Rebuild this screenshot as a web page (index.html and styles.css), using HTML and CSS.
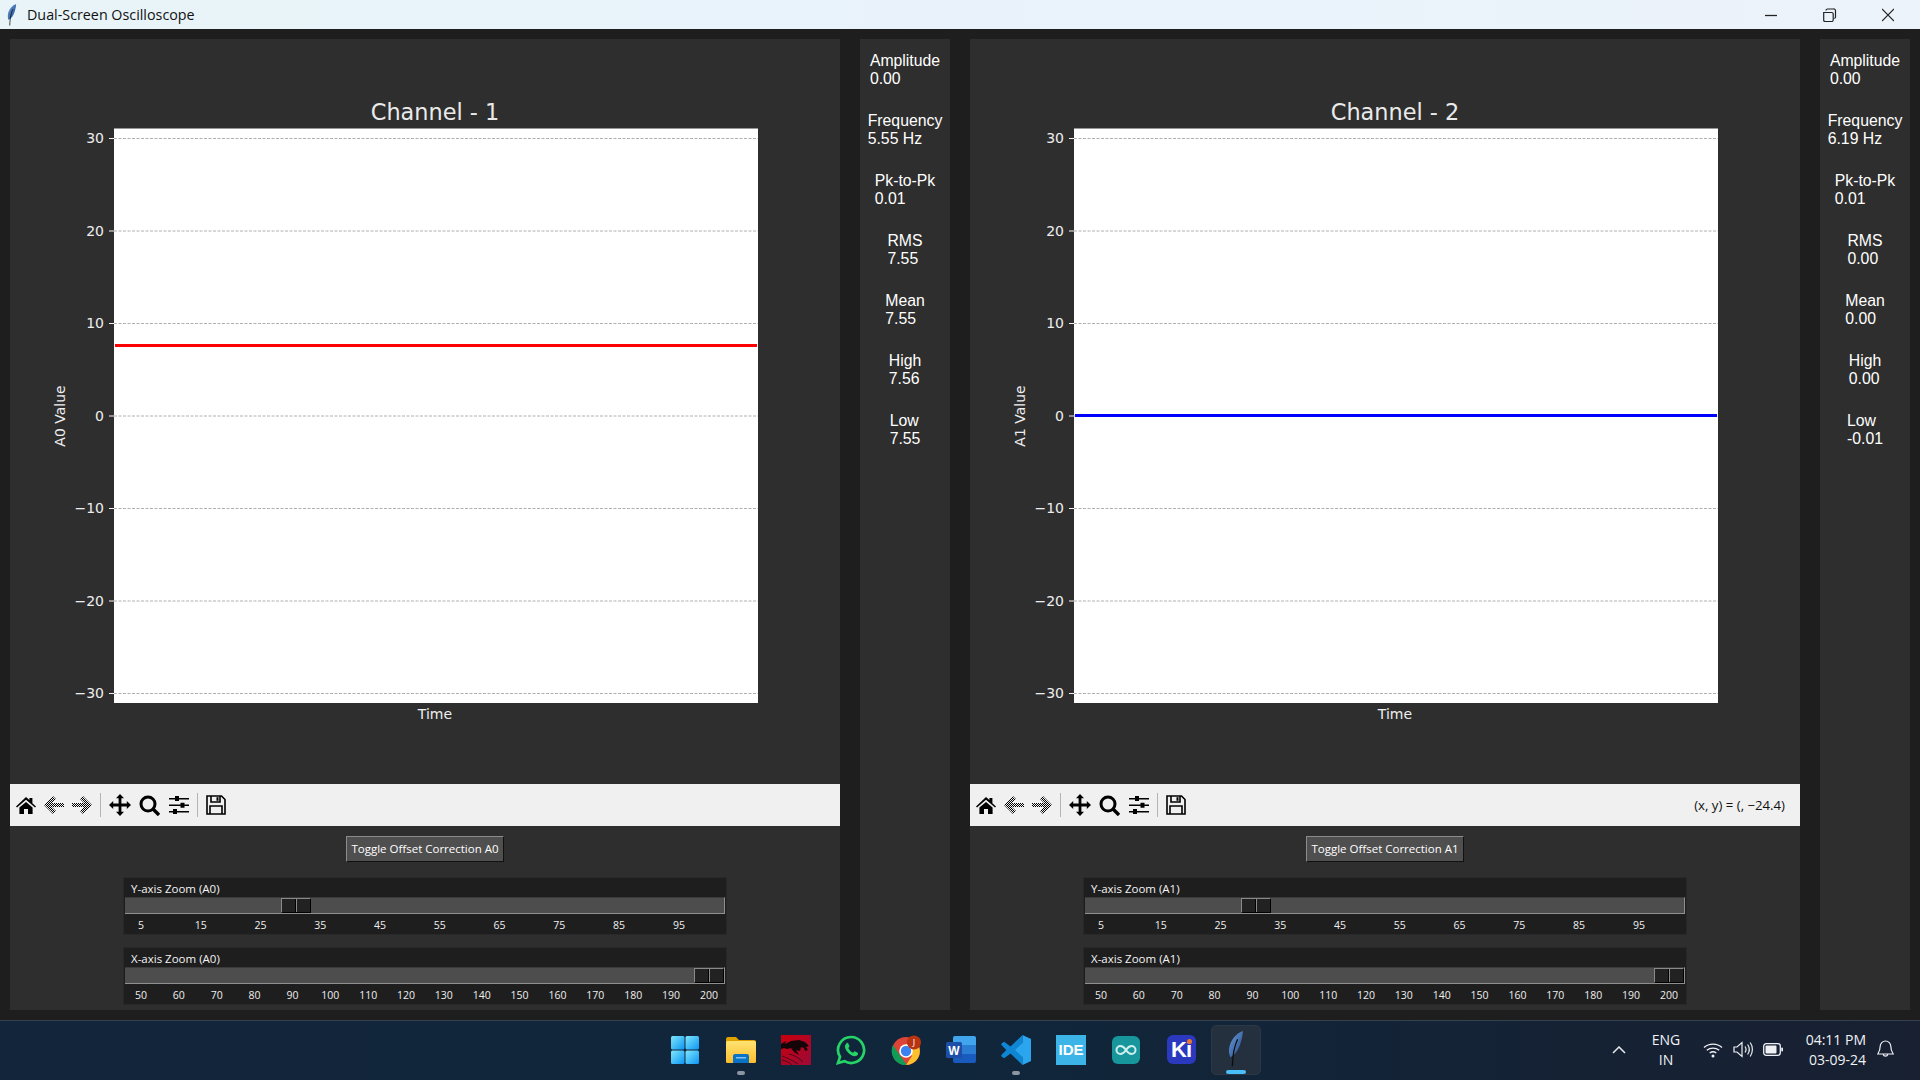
FILE: index.html
```html
<!DOCTYPE html>
<html lang="en">
<head>
<meta charset="utf-8">
<title>Dual-Screen Oscilloscope</title>
<link rel="stylesheet" href="styles.css">
</head>
<body>
<svg class="sprite" width="0" height="0" aria-hidden="true">
  <defs>
    <pattern id="dither" width="2" height="2" patternUnits="userSpaceOnUse">
      <rect width="2" height="2" fill="#f0f0f0"/>
      <rect width="1" height="1" fill="#000"/>
      <rect x="1" y="1" width="1" height="1" fill="#000"/>
    </pattern>
    <linearGradient id="featherBlue" x1="0" y1="0" x2="1" y2="1">
      <stop offset="0" stop-color="#6b9bdc"/>
      <stop offset="1" stop-color="#234a88"/>
    </linearGradient>
    <linearGradient id="startBlue" x1="0" y1="0" x2="1" y2="1">
      <stop offset="0" stop-color="#7fe6fb"/>
      <stop offset="1" stop-color="#0c95f5"/>
    </linearGradient>
    <linearGradient id="folderYellow" x1="0" y1="0" x2="0" y2="1">
      <stop offset="0" stop-color="#ffe372"/>
      <stop offset="1" stop-color="#fdbd2e"/>
    </linearGradient>
    <linearGradient id="msiRed" x1="0" y1="0" x2="1" y2="1">
      <stop offset="0" stop-color="#c8000e"/>
      <stop offset="1" stop-color="#9c0a36"/>
    </linearGradient>
    <symbol id="i-home" viewBox="0 0 20 17">
      <path d="M10 0l3.4 3V1h3v5.2L20 9.4l-1 1.2L10 2.8 1 10.6 0 9.4z"/>
      <path d="M3.4 10.6L10 5l6.6 5.6V17H12v-5H8v5H3.4z"/>
    </symbol>
    <symbol id="i-back" viewBox="0 0 20 20">
      <path fill="url(#dither)" d="M0 10l9-9 3 3-4 4h12v4H8l4 4-3 3z"/>
    </symbol>
    <symbol id="i-forward" viewBox="0 0 20 20">
      <path fill="url(#dither)" d="M20 10l-9-9-3 3 4 4H0v4h12l-4 4 3 3z"/>
    </symbol>
    <symbol id="i-move" viewBox="0 0 22 22">
      <path d="M11 0l4 4.2h-2.600v5.400h5.400V7L22 11l-4.200 4v-2.600h-5.400v5.400H15L11 22l-4-4.200h2.600v-5.400H4.200V15L0 11l4.200-4v2.600h5.400V4.200H7z"/>
    </symbol>
    <symbol id="i-zoom" viewBox="0 0 22 21">
      <circle cx="9" cy="9" r="7" fill="none" stroke="#000" stroke-width="3"/>
      <path d="M14 14l6 6" fill="none" stroke="#000" stroke-width="3.400"/>
    </symbol>
    <symbol id="i-sliders" viewBox="0 0 20 20">
      <path d="M0 3h20v1.500H0zM0 9.500h20V11H0zM0 16h20v1.500H0z"/>
      <path d="M6 1h4v5H6zM11.500 7.700h4v5h-4zM4 14h4v5H4z"/>
    </symbol>
    <symbol id="i-save" viewBox="0 0 20 20">
      <path fill="none" stroke="#000" stroke-width="1.600" d="M1 1h14.500L19 4.500V19H1zM5 1v6h9V1M4 19v-8h12v8"/>
      <path d="M10.500 2.200h2v3.600h-2z"/>
    </symbol>
    <symbol id="i-feather" viewBox="0 0 18 44">
      <path fill="url(#featherBlue)" d="M17.500 0C9 3 2 11 .5 22c-.6 4 .5 7 1.500 10 6-3 10-9 12.500-17 1.500-5 2.700-10 3-15z"/>
      <path fill="none" stroke="#0b0b0b" stroke-width="1.500" d="M11 10C7 18 5 28 4.500 43"/>
    </symbol>
  </defs>
</svg>

<header class="titlebar">
  <svg class="title-icon" viewBox="0 0 18 44"><use href="#i-feather"/></svg>
  <span class="title-text">Dual-Screen Oscilloscope</span>
  <div class="window-controls">
    <svg class="win-btn" viewBox="0 0 58 14"><path d="M0 7.500h12" stroke="#222" stroke-width="1.300" fill="none"/></svg>
    <svg class="win-btn win-restore" viewBox="0 0 59 14"><path d="M.7 4.500h8a1.500 1.500 0 0 1 1.500 1.500v6a1.500 1.500 0 0 1-1.500 1.500h-7A1.500 1.500 0 0 1 .7 12zM3 2.500V2.200A1.500 1.500 0 0 1 4.500 1h6A1.700 1.700 0 0 1 12.500 2.700V9a1.500 1.500 0 0 1-1.200 1.500" stroke="#222" stroke-width="1.200" fill="none"/></svg>
    <svg class="win-btn win-close" viewBox="0 0 12 14"><path d="M0 1l12 12M12 1L0 13" stroke="#222" stroke-width="1.200" fill="none"/></svg>
  </div>
</header>

<main class="workspace">
  <section class="panel">
    <svg class="figure" viewBox="0 0 830 745">
      <rect class="axes-bg" x="104" y="89.500" width="644" height="574.500"/>
      <text class="fig-title" x="425" y="81">Channel - 1</text>
      <g class="grid">
        <path d="M104 99.500H748M104 192H748M104 284.500H748M104 377H748M104 469.500H748M104 562H748M104 654.500H748"/>
      </g>
      <g class="tickmarks">
        <path d="M99 99.500h5M99 192h5M99 284.500h5M99 377h5M99 469.500h5M99 562h5M99 654.500h5"/>
      </g>
      <g class="ticklabels">
        <text x="94" y="103.500">30</text>
        <text x="94" y="196.500">20</text>
        <text x="94" y="289">10</text>
        <text x="94" y="381.500">0</text>
        <text x="94" y="474">−10</text>
        <text x="94" y="566.500">−20</text>
        <text x="94" y="659">−30</text>
      </g>
      <text class="axis-label" x="425" y="680">Time</text>
      <text class="axis-label" transform="translate(55 377) rotate(-90)">A0 Value</text>
      <path class="trace trace-red" d="M105 306.500H747"/>
    </svg>
    <div class="toolbar">
      <svg class="tool tool-home"><use href="#i-home"/></svg>
      <svg class="tool tool-arrow"><use href="#i-back"/></svg>
      <svg class="tool tool-arrow"><use href="#i-forward"/></svg>
      <span class="tool-sep"></span>
      <svg class="tool tool-move"><use href="#i-move"/></svg>
      <svg class="tool tool-zoom"><use href="#i-zoom"/></svg>
      <svg class="tool tool-sliders"><use href="#i-sliders"/></svg>
      <span class="tool-sep"></span>
      <svg class="tool tool-save"><use href="#i-save"/></svg>
    </div>
    <div class="controls">
      <button class="toggle">Toggle Offset Correction A0</button>
      <div class="scale">
        <div class="scale-label">Y-axis Zoom (A0)</div>
        <div class="trough"><div class="thumb" style="left:156px"></div></div>
        <div class="scale-ticks scale-ticks-y"><span>5</span><span>15</span><span>25</span><span>35</span><span>45</span><span>55</span><span>65</span><span>75</span><span>85</span><span>95</span></div>
      </div>
      <div class="scale">
        <div class="scale-label">X-axis Zoom (A0)</div>
        <div class="trough"><div class="thumb" style="left:569px"></div></div>
        <div class="scale-ticks"><span>50</span><span>60</span><span>70</span><span>80</span><span>90</span><span>100</span><span>110</span><span>120</span><span>130</span><span>140</span><span>150</span><span>160</span><span>170</span><span>180</span><span>190</span><span>200</span></div>
      </div>
    </div>
  </section>

  <aside class="stats">
    <div class="stat">Amplitude<br>0.00</div>
    <div class="stat">Frequency<br>5.55 Hz</div>
    <div class="stat">Pk-to-Pk<br>0.01</div>
    <div class="stat">RMS<br>7.55</div>
    <div class="stat">Mean<br>7.55</div>
    <div class="stat">High<br>7.56</div>
    <div class="stat">Low<br>7.55</div>
  </aside>

  <section class="panel">
    <svg class="figure" viewBox="0 0 830 745">
      <rect class="axes-bg" x="104" y="89.500" width="644" height="574.500"/>
      <text class="fig-title" x="425" y="81">Channel - 2</text>
      <g class="grid">
        <path d="M104 99.500H748M104 192H748M104 284.500H748M104 377H748M104 469.500H748M104 562H748M104 654.500H748"/>
      </g>
      <g class="tickmarks">
        <path d="M99 99.500h5M99 192h5M99 284.500h5M99 377h5M99 469.500h5M99 562h5M99 654.500h5"/>
      </g>
      <g class="ticklabels">
        <text x="94" y="103.500">30</text>
        <text x="94" y="196.500">20</text>
        <text x="94" y="289">10</text>
        <text x="94" y="381.500">0</text>
        <text x="94" y="474">−10</text>
        <text x="94" y="566.500">−20</text>
        <text x="94" y="659">−30</text>
      </g>
      <text class="axis-label" x="425" y="680">Time</text>
      <text class="axis-label" transform="translate(55 377) rotate(-90)">A1 Value</text>
      <path class="trace trace-blue" d="M105 376.500H747"/>
    </svg>
    <div class="toolbar">
      <svg class="tool tool-home"><use href="#i-home"/></svg>
      <svg class="tool tool-arrow"><use href="#i-back"/></svg>
      <svg class="tool tool-arrow"><use href="#i-forward"/></svg>
      <span class="tool-sep"></span>
      <svg class="tool tool-move"><use href="#i-move"/></svg>
      <svg class="tool tool-zoom"><use href="#i-zoom"/></svg>
      <svg class="tool tool-sliders"><use href="#i-sliders"/></svg>
      <span class="tool-sep"></span>
      <svg class="tool tool-save"><use href="#i-save"/></svg>
      <span class="coords">(x, y) = (, −24.4)</span>
    </div>
    <div class="controls">
      <button class="toggle">Toggle Offset Correction A1</button>
      <div class="scale">
        <div class="scale-label">Y-axis Zoom (A1)</div>
        <div class="trough"><div class="thumb" style="left:156px"></div></div>
        <div class="scale-ticks scale-ticks-y"><span>5</span><span>15</span><span>25</span><span>35</span><span>45</span><span>55</span><span>65</span><span>75</span><span>85</span><span>95</span></div>
      </div>
      <div class="scale">
        <div class="scale-label">X-axis Zoom (A1)</div>
        <div class="trough"><div class="thumb" style="left:569px"></div></div>
        <div class="scale-ticks"><span>50</span><span>60</span><span>70</span><span>80</span><span>90</span><span>100</span><span>110</span><span>120</span><span>130</span><span>140</span><span>150</span><span>160</span><span>170</span><span>180</span><span>190</span><span>200</span></div>
      </div>
    </div>
  </section>

  <aside class="stats">
    <div class="stat">Amplitude<br>0.00</div>
    <div class="stat">Frequency<br>6.19 Hz</div>
    <div class="stat">Pk-to-Pk<br>0.01</div>
    <div class="stat">RMS<br>0.00</div>
    <div class="stat">Mean<br>0.00</div>
    <div class="stat">High<br>0.00</div>
    <div class="stat">Low<br>-0.01</div>
  </aside>
</main>

<footer class="taskbar">
  <div class="task-spacer"></div>
  <div class="task-apps">
    <div class="app app-start">
      <svg class="app-icon" viewBox="0 0 30 30">
        <g fill="url(#startBlue)"><rect x="1" y="1" width="13.500" height="13.500" rx="1.500"/><rect x="15.500" y="1" width="13.500" height="13.500" rx="1.500"/><rect x="1" y="15.500" width="13.500" height="13.500" rx="1.500"/><rect x="15.500" y="15.500" width="13.500" height="13.500" rx="1.500"/></g>
      </svg>
    </div>
    <div class="app app-running">
      <svg class="app-icon" viewBox="0 0 30 30">
        <path fill="#e0a000" d="M0 4a2 2 0 0 1 2-2h8l3 3h15a2 2 0 0 1 2 2v5H0z"/>
        <rect fill="url(#folderYellow)" y="6" width="30" height="22" rx="1.500"/>
        <path fill="#0b73c6" d="M7 21a2 2 0 0 1 2-2h12a2 2 0 0 1 2 2v7H7z"/>
        <rect fill="#7fc4f2" x="10" y="22" width="10" height="1.500"/>
      </svg>
    </div>
    <div class="app">
      <svg class="app-icon" viewBox="0 0 30 30">
        <rect fill="url(#msiRed)" width="30" height="30"/>
        <path fill="#140508" d="M0 9l5-3-1 3 6-3 8-1 6 2 4 4-3 1 2 3-3 1-1-3-3-1-1 4-4-1 3 5-5-3-3-4-4 1-3-1-3 1z"/>
        <path fill="none" stroke="#4a0a1e" stroke-width="1" d="M1 21c5 2 10 4 16 8M1 25c4 1 7 2 10 5M8 19c5 1 10 4 14 8"/>
      </svg>
    </div>
    <div class="app">
      <svg class="app-icon" viewBox="0 0 30 30">
        <path fill="none" stroke="#25d366" stroke-width="2.700" d="M15 2a13 13 0 0 0-11 19.800L2 28l6.500-1.800A13 13 0 1 0 15 2z"/>
        <path fill="#25d366" d="M10.500 8.500c-1 .8-1.700 2-1.500 3.500.4 3.800 5.500 9.200 9.800 9.300 1.500 0 2.700-.8 3.200-2 .3-.7.200-1.300-.3-1.600l-2.500-1.300c-.5-.2-.9-.1-1.200.3l-.9 1.100c-2.200-.9-3.700-2.400-4.800-4.700l.9-1c.3-.4.300-.8.200-1.200l-1.100-2.500c-.3-.6-1.100-.7-1.800-.4z"/>
      </svg>
    </div>
    <div class="app">
      <svg class="app-icon" viewBox="0 0 30 30">
        <circle cx="15" cy="16" r="14" fill="#db4437"/>
        <path fill="#0f9d58" d="M15 30A14 14 0 0 1 2 10l8 12 6 8z"/>
        <path fill="#fbc02d" d="M15 30a14 14 0 0 0 12-21H15l6 12z"/>
        <circle cx="15" cy="16" r="6.800" fill="#fff"/>
        <circle cx="15" cy="16" r="5.200" fill="#3b82f0"/>
        <circle cx="23" cy="7.500" r="7" fill="#b8330f"/>
        <text class="chrome-badge" x="23" y="10.500">J</text>
      </svg>
    </div>
    <div class="app">
      <svg class="app-icon" viewBox="0 0 30 30">
        <path fill="#41a5ee" d="M9 1h19a2 2 0 0 1 2 2v7H7V3a2 2 0 0 1 2-2z"/>
        <rect fill="#2b7cd3" x="7" y="10" width="23" height="9"/>
        <path fill="#185abd" d="M7 19h23v7a2 2 0 0 1-2 2H9a2 2 0 0 1-2-2z"/>
        <rect fill="#1e4fa8" x="0" y="7" width="16" height="16" rx="1.500"/>
        <text class="word-badge" x="8" y="19.500">W</text>
      </svg>
    </div>
    <div class="app app-running">
      <svg class="app-icon" viewBox="0 0 30 30">
        <path fill="#0e86d4" d="M21.500 0L9.500 11.500 3.200 6.700.8 8.200c-.7.500-.7 1.500-.1 2.100L5.300 15 .7 19.700c-.6.600-.6 1.600.1 2.100l2.400 1.500 6.300-4.800L21.500 30z"/>
        <path fill="#2aa5ee" d="M21.500 0L30 4v22l-8.500 4zM21.500 8l-7.500 7 7.500 7z"/>
      </svg>
    </div>
    <div class="app">
      <div class="ide-tile">IDE</div>
    </div>
    <div class="app">
      <svg class="app-icon arduino" viewBox="0 0 28 28">
        <rect width="28" height="28" rx="6" fill="#17979c"/>
        <path fill="none" stroke="#cfeeee" stroke-width="2" d="M14 14c-2-3-3.500-4-5.500-4a4 4 0 0 0 0 8c2 0 3.500-1 5.500-4zM14 14c2-3 3.500-4 5.500-4a4 4 0 0 1 0 8c-2 0-3.500-1-5.500-4z"/>
      </svg>
    </div>
    <div class="app">
      <div class="ki-tile">Ki<span class="ki-dot"></span></div>
    </div>
    <div class="app app-active">
      <svg class="feather-icon" viewBox="0 0 18 44"><use href="#i-feather"/></svg>
    </div>
  </div>
  <div class="tray">
    <svg class="tray-chevron" viewBox="0 0 14 8"><path d="M1 7l6-6 6 6" fill="none" stroke="#e8eaee" stroke-width="1.500"/></svg>
    <div class="tray-lang">ENG<br>IN</div>
    <svg class="tray-wifi" viewBox="0 0 20 16"><path fill="none" stroke="#eef0f4" stroke-width="1.300" d="M1 5.500c5-4.600 13-4.600 18 0M3.800 8.300c3.500-3 8.900-3 12.400 0M6.700 11c1.900-1.400 4.700-1.400 6.600 0"/><circle cx="10" cy="14" r="1.500" fill="#eef0f4"/></svg>
    <svg class="tray-sound" viewBox="0 0 20 17"><path fill="none" stroke="#eef0f4" stroke-width="1.200" d="M1 6h3l5-4.500v14L4 11H1zM12 5.500c1.200 1.700 1.200 4.300 0 6M14.600 3.500c2 2.900 2 7.100 0 10M17.200 1.500c2.900 4 2.900 10 0 14"/></svg>
    <svg class="tray-battery" viewBox="0 0 20 13"><rect x=".7" y=".7" width="16.600" height="11.600" rx="2.500" fill="none" stroke="#eef0f4" stroke-width="1.300"/><rect x="2.500" y="2.500" width="11" height="8" rx="1" fill="#eef0f4"/><rect x="18.300" y="4.500" width="1.700" height="4" rx=".8" fill="#eef0f4"/></svg>
    <div class="tray-clock">04:11 PM<br>03-09-24</div>
    <svg class="tray-bell" viewBox="0 0 17 19"><path fill="none" stroke="#eef0f4" stroke-width="1.200" d="M8.500 1a5.300 5.300 0 0 0-5.300 5.300c0 4-1 5.700-2.400 7.700h15.400c-1.400-2-2.400-3.700-2.400-7.700A5.300 5.300 0 0 0 8.500 1zM6.200 14.500a2.400 2.400 0 0 0 4.600 0"/></svg>
  </div>
</footer>
</body>
</html>
```

FILE: styles.css
```css
* { box-sizing: border-box; }

html, body {
  margin: 0;
  padding: 0;
  width: 1920px;
  height: 1080px;
  overflow: hidden;
}

body {
  display: flex;
  flex-direction: column;
  background: #1e1e1e;
  font-family: "Open Sans", "Noto Sans", sans-serif;
}

.sprite { position: absolute; }

/* ---------- title bar ---------- */
.titlebar {
  height: 29px;
  flex: none;
  display: flex;
  align-items: center;
  background: linear-gradient(90deg, #e8f4f8 0%, #e9f2fb 50%, #ecf3fa 100%);
  color: #111;
}
.title-icon { width: 10px; height: 22px; margin-left: 7px; flex: none; }
.title-text { margin-left: 10px; font-size: 14.300px; }
.window-controls { margin-left: auto; display: flex; align-items: center; padding-right: 26px; }
.win-btn { width: 58px; height: 14px; display: block; }
.win-restore { width: 59px; }
.win-close { width: 12px; }

/* ---------- main area ---------- */
.workspace {
  height: 991px;
  flex: none;
  display: flex;
  gap: 20px;
  padding: 10px;
}
.panel {
  width: 830px;
  flex: none;
  display: flex;
  flex-direction: column;
  background: #2e2e2e;
}
.figure { width: 830px; height: 745px; display: block; flex: none; }

.axes-bg { fill: #fff; }
.fig-title {
  font-family: "DejaVu Sans", sans-serif;
  font-size: 22.400px;
  fill: #eaeaea;
  text-anchor: middle;
}
.grid path {
  fill: none;
  stroke: #b0b0b0;
  stroke-width: 1;
  stroke-dasharray: 3 1.500;
}
.tickmarks path { fill: none; stroke: #f2f2f2; stroke-width: 1; }
.ticklabels text {
  font-family: "DejaVu Sans", sans-serif;
  font-size: 14px;
  fill: #eee;
  text-anchor: end;
}
.axis-label {
  font-family: "DejaVu Sans", sans-serif;
  font-size: 14px;
  fill: #eee;
  text-anchor: middle;
}
.trace { fill: none; stroke-width: 3; }
.trace-red { stroke: #f00; }
.trace-blue { stroke: #00f; }

/* ---------- matplotlib toolbar ---------- */
.toolbar {
  height: 42px;
  flex: none;
  display: flex;
  align-items: center;
  background: #f0f0f0;
  padding-left: 6px;
  padding-right: 15px;
}
.tool { display: block; flex: none; fill: #000; }
.tool-home { width: 20px; height: 17px; margin-top: 1px; }
.tool-arrow { width: 20px; height: 20px; margin-left: 8px; }
.tool-sep { width: 1px; height: 24px; background: #b4b4b4; margin-left: 8px; flex: none; }
.tool-move { width: 22px; height: 22px; margin-left: 8px; }
.tool-zoom { width: 22px; height: 21px; margin-left: 8px; }
.tool-sliders { width: 20px; height: 20px; margin-left: 8px; }
.tool-save { width: 20px; height: 20px; margin-left: 8px; }
.coords { margin-left: auto; font-size: 13.200px; color: #111; }

/* ---------- controls ---------- */
.controls {
  display: flex;
  flex-direction: column;
  align-items: center;
  padding-top: 10px;
}
.toggle {
  width: 158px;
  height: 26px;
  padding: 0 0 2px;
  margin-bottom: 15px;
  font-family: "Open Sans", "Noto Sans", sans-serif;
  font-size: 11.500px;
  color: #fff;
  background: #4f4f4f;
  border-style: solid;
  border-color: #8c8c8c #111 #111 #8c8c8c;
  border-width: 1.500px;
}
.scale {
  width: 604px;
  height: 58px;
  margin-bottom: 12px;
  background: #1e1e1e;
  border: 1px solid #282828;
  padding: 0 1px;
}
.scale-label {
  height: 19px;
  padding: 2px 0 0 6px;
  font-size: 11.500px;
  line-height: 17px;
  color: #f4f4f4;
}
.trough {
  position: relative;
  height: 17px;
  background: #4d4d4d;
  border-top: 1px solid #3a3a3a;
  border-bottom: 1px solid #8f8f8f;
  border-right: 1px solid #8f8f8f;
}
.thumb {
  position: absolute;
  top: 0;
  width: 30px;
  height: 15px;
  background: #222;
  border: 1px solid;
  border-color: #8a8a8a #000 #000 #8a8a8a;
  background-image: linear-gradient(90deg, transparent 13px, #000 13px, #000 14px, #8a8a8a 14px, #8a8a8a 15px, transparent 15px);
}
.scale-ticks {
  display: flex;
  justify-content: space-between;
  padding: 3px 4px 0;
  font-size: 10.500px;
  line-height: 16px;
  color: #eee;
}
.scale-ticks span { width: 24px; text-align: center; }
.scale-ticks-y { padding-right: 34px; }

/* ---------- statistics ---------- */
.stats {
  width: 90px;
  flex: none;
  display: flex;
  flex-direction: column;
  align-items: center;
  gap: 24px;
  padding-top: 13px;
  background: #2e2e2e;
  font-family: "Liberation Sans", Arial, sans-serif;
  font-size: 15.800px;
  line-height: 18px;
  color: #fff;
}
.stat { text-align: left; }

/* ---------- taskbar ---------- */
.taskbar {
  height: 60px;
  flex: none;
  display: grid;
  grid-template-columns: 1fr auto 1fr;
  align-items: center;
  padding-bottom: 2px;
  border-top: 1px solid #36414f;
  background: linear-gradient(90deg, #13253b 0%, #10263b 50%, #182031 100%);
}
.task-apps { display: flex; gap: 5px; }
.app {
  position: relative;
  left: 1px;
  width: 50px;
  height: 50px;
  display: flex;
  align-items: center;
  justify-content: center;
  border-radius: 5px;
}
.app-start { left: 0; }
.app-icon { width: 30px; height: 30px; display: block; }
.app-running::after {
  content: "";
  position: absolute;
  left: 21px;
  bottom: 0;
  width: 8px;
  height: 4px;
  border-radius: 2px;
  background: #8d96a0;
}
.app-active {
  background: #25303f;
  border: 1px solid #2b3746;
}
.app-active::after {
  content: "";
  position: absolute;
  left: 14px;
  bottom: 0;
  width: 20px;
  height: 4px;
  border-radius: 2px;
  background: #47bdfa;
}
.feather-icon { width: 18px; height: 36px; margin-bottom: 2px; }
.ide-tile {
  width: 30px;
  height: 30px;
  background: #3cb4e7;
  color: #fff;
  font-family: "Liberation Sans", Arial, sans-serif;
  font-weight: 700;
  font-size: 15px;
  line-height: 30px;
  text-align: center;
}
.arduino { width: 28px; height: 28px; }
.ki-tile {
  position: relative;
  width: 29px;
  height: 29px;
  border-radius: 6px;
  background: #2a39bd;
  color: #fff;
  font-family: "Liberation Sans", Arial, sans-serif;
  font-weight: 700;
  font-size: 22px;
  line-height: 29px;
  text-align: center;
  letter-spacing: -1px;
}
.ki-dot {
  position: absolute;
  top: 4px;
  right: 4px;
  width: 5px;
  height: 5px;
  border-radius: 50%;
  background: #f2742b;
}
.chrome-badge { font-family: "Open Sans", sans-serif; font-size: 9px; fill: #fff; text-anchor: middle; }
.word-badge { font-family: "Liberation Sans", Arial, sans-serif; font-size: 12px; font-weight: 700; fill: #fff; text-anchor: middle; }

.tray {
  justify-self: end;
  display: flex;
  align-items: center;
  padding-right: 26px;
  color: #f0f2f5;
  font-size: 14px;
  line-height: 19.500px;
}
.tray-chevron { width: 14px; height: 8px; }
.tray-lang { width: 40px; margin-left: 20px; text-align: center; }
.tray-wifi { width: 20px; height: 16px; margin-left: 17px; }
.tray-sound { width: 20px; height: 17px; margin-left: 10px; }
.tray-battery { width: 20px; height: 13px; margin-left: 10px; }
.tray-clock { width: 64px; margin-left: 19px; text-align: right; white-space: nowrap; }
.tray-bell { width: 17px; height: 19px; margin-left: 11px; }
```
